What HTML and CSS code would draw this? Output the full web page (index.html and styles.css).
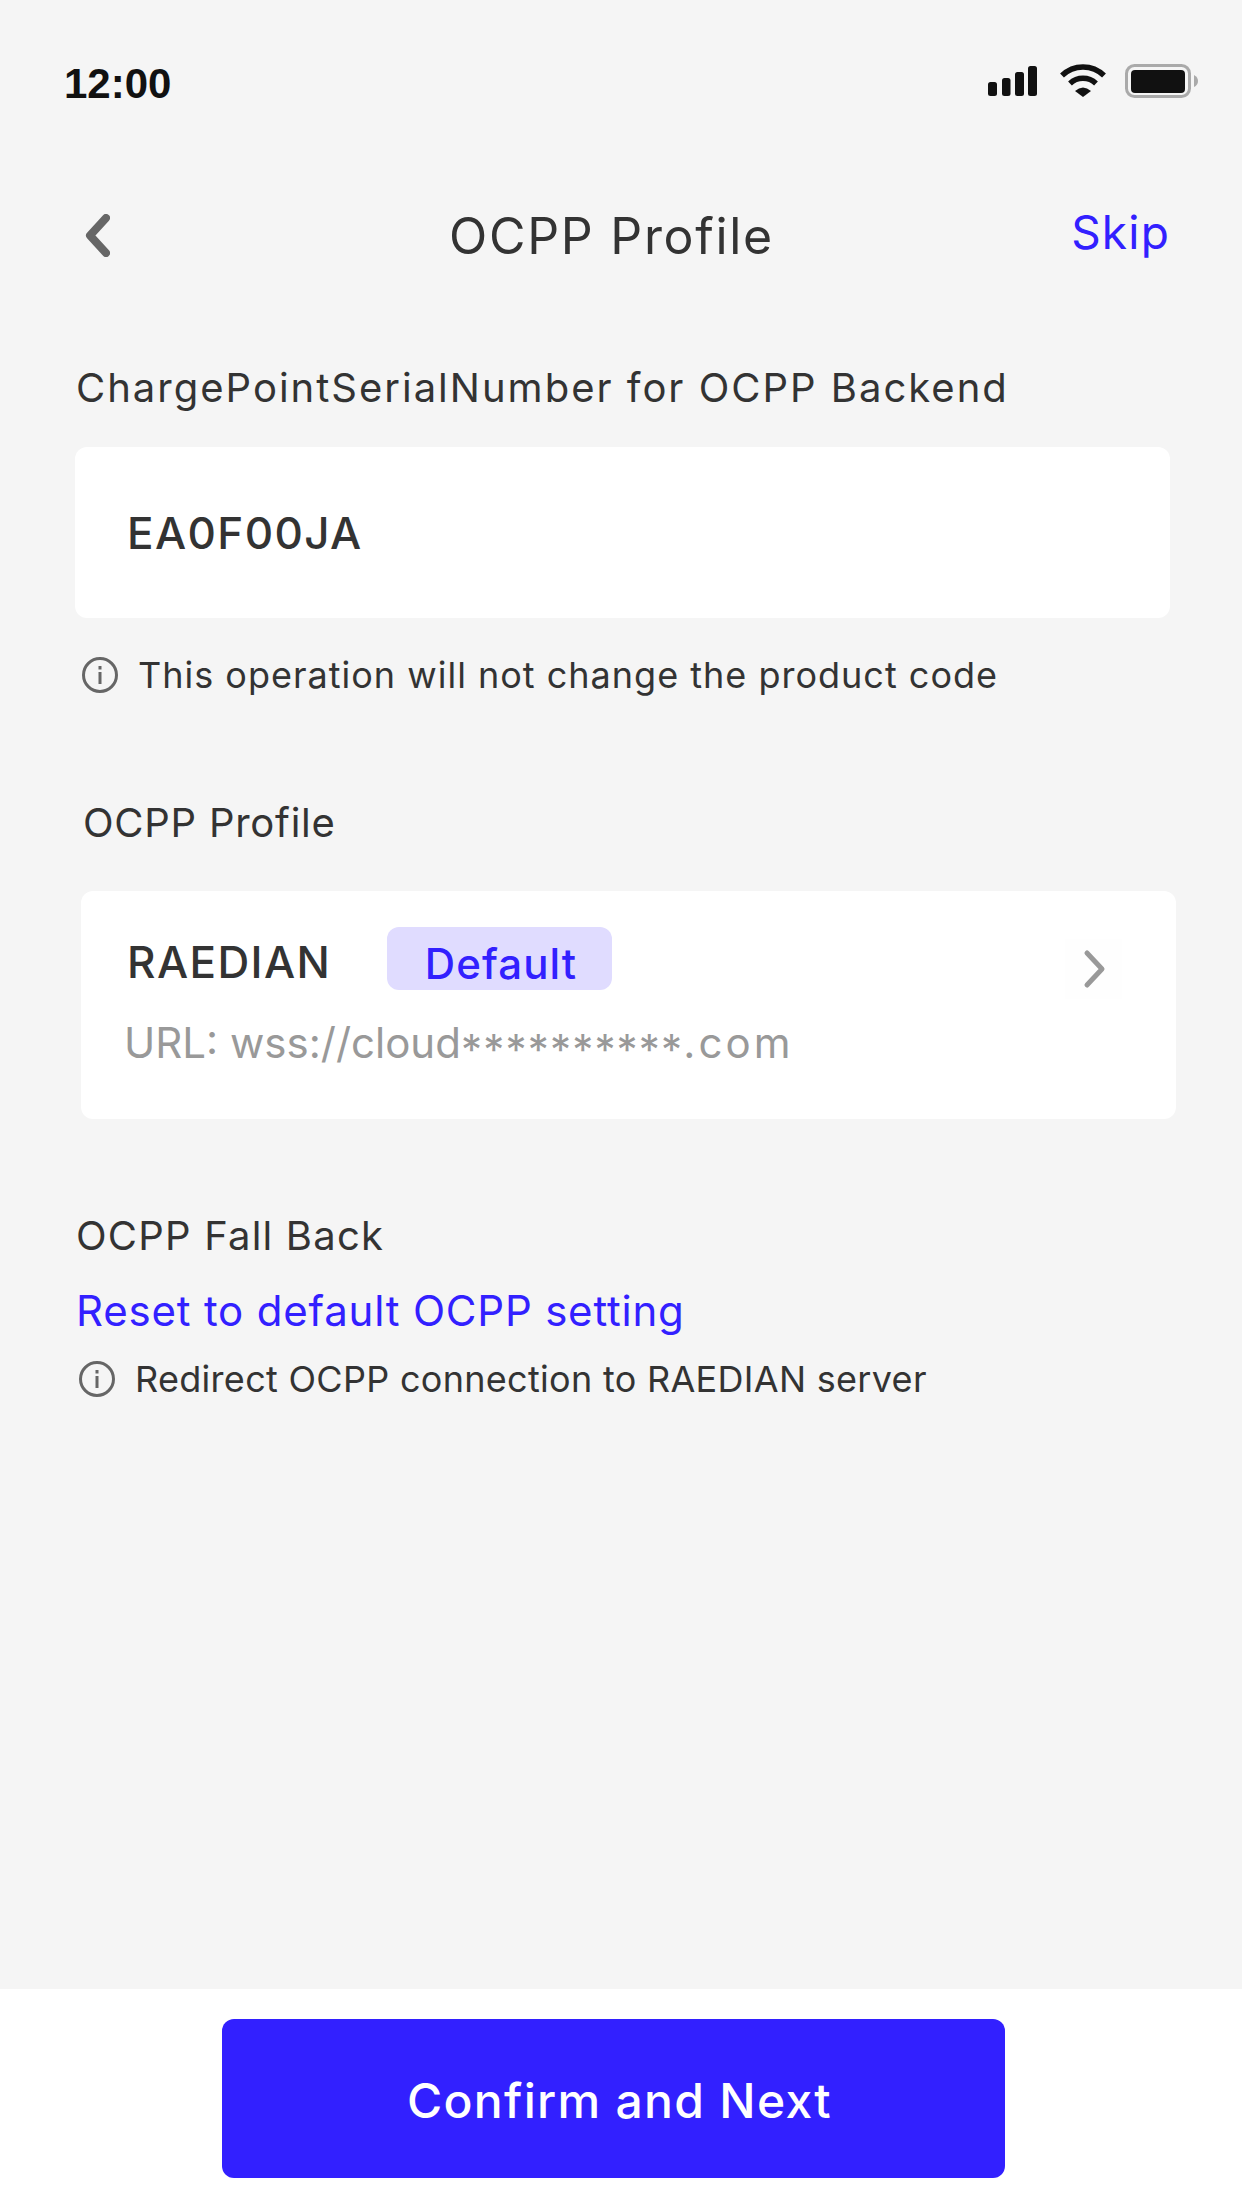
FILE: index.html
```html
<!DOCTYPE html>
<html lang="en">
<head>
    <meta charset="UTF-8">
    <title>OCPP Profile</title>
    <link rel="stylesheet" href="styles.css">
</head>
<body>
    <div class="status-bar">
        <span class="time">12:00</span>
        <svg class="status-icons" viewBox="0 0 210 34" width="210" height="34">
            <rect x="0" y="18" width="9" height="14" rx="2.5" fill="#111"/>
            <rect x="14" y="14" width="8.5" height="18" rx="2.5" fill="#111"/>
            <rect x="27" y="8" width="9" height="24" rx="2.5" fill="#111"/>
            <rect x="40" y="2" width="9" height="30" rx="2.5" fill="#111"/>
            <path d="M74 11.5A30 30 0 0 1 116 11.5" fill="none" stroke="#111" stroke-width="5.5"/>
            <path d="M82 19.5A19 19 0 0 1 108 19.5" fill="none" stroke="#111" stroke-width="5.5"/>
            <path d="M87 27Q95 20 103 27L95 33Z" fill="#111"/>
            <rect x="138.5" y="1.5" width="63" height="31" rx="8" fill="none" stroke="#aaa" stroke-width="3"/>
            <rect x="143" y="6" width="54" height="23" rx="4" fill="#111"/>
            <path d="M206 11Q210 13 210 17Q210 21 206 23Z" fill="#aaa"/>
        </svg>
    </div>

    <div class="nav">
        <span class="back">
            <svg viewBox="0 0 25 43" width="25" height="43"><path d="M21 4L5 21.5L21 39" fill="none" stroke="#666" stroke-width="8" stroke-linecap="round" stroke-linejoin="round"/></svg>
        </span>
        <span class="nav-title">OCPP Profile</span>
        <span class="skip">Skip</span>
    </div>

    <div class="main">
        <div class="label serial-label">ChargePointSerialNumber for OCPP Backend</div>
        <div class="card serial-card">EA0F00JA</div>
        <div class="hint hint-first">
            <svg viewBox="0 0 36 36" width="36" height="36"><circle cx="18" cy="18" r="16.5" fill="none" stroke="#666" stroke-width="3"/><rect x="16.5" y="15" width="3" height="12" fill="#666"/><rect x="16.5" y="9" width="3" height="3.5" fill="#666"/></svg>
            <span>This operation will not change the product code</span>
        </div>

        <div class="label profile-label">OCPP Profile</div>
        <div class="card profile-card">
            <div class="profile-row">
                <span class="profile-name">RAEDIAN</span>
                <span class="badge">Default</span>
                <svg class="chevron" viewBox="0 0 57 60" width="57" height="60"><path d="M22 14L37 30L22 46" fill="none" stroke="#999" stroke-width="5" stroke-linecap="round" stroke-linejoin="round"/></svg>
            </div>
            <div class="profile-url">URL: wss://cloud<span class="mask">**********</span><span class="url-end">.com</span></div>
        </div>

        <div class="label fallback-label">OCPP Fall Back</div>
        <div class="reset-link">Reset to default OCPP setting</div>
        <div class="hint hint-second">
            <svg viewBox="0 0 36 36" width="36" height="36"><circle cx="18" cy="18" r="16.5" fill="none" stroke="#666" stroke-width="3"/><rect x="16.5" y="15" width="3" height="12" fill="#666"/><rect x="16.5" y="9" width="3" height="3.5" fill="#666"/></svg>
            <span>Redirect OCPP connection to RAEDIAN server</span>
        </div>
    </div>

    <div class="footer">
        <button class="next-btn">Confirm and Next</button>
    </div>
</body>
</html>
```

FILE: styles.css
```css
* {
    margin: 0;
    padding: 0;
    box-sizing: border-box;
}

body {
    font-family: Inter, 'Noto Sans', sans-serif;
    background: #f5f5f5;
    color: #333;
    width: 1242px;
    height: 2208px;
    display: flex;
    flex-direction: column;
    overflow: hidden;
}

.status-bar {
    display: flex;
    justify-content: space-between;
    align-items: center;
    height: 66px;
    margin-top: 48px;
    padding: 0 44px 0 64px;
}

.time {
    font-family: 'Liberation Sans', Arial, sans-serif;
    font-size: 42px;
    font-weight: bold;
    color: #111;
    padding-top: 6px;
}

.nav {
    display: flex;
    justify-content: space-between;
    align-items: center;
    height: 80px;
    margin-top: 82px;
    padding: 0 72px 0 85px;
}

.back {
    width: 64px;
    height: 43px;
    margin-top: -2px;
}

.nav-title {
    font-size: 50px;
    letter-spacing: 1.7px;
    width: 322px;
    white-space: nowrap;
}

.skip {
    font-size: 46px;
    letter-spacing: 1.2px;
    color: #3220ff;
    margin-top: -8px;
}

.main {
    flex: 1;
}

.label {
    font-size: 40px;
    line-height: 56px;
    margin-left: 76px;
    white-space: nowrap;
}

.serial-label {
    margin-top: 84px;
    letter-spacing: 2px;
}

.card {
    background: #fff;
    border-radius: 12px;
}

.serial-card {
    display: flex;
    align-items: center;
    width: 1095px;
    height: 171px;
    margin: 31px 0 0 75px;
    padding-left: 52px;
    font-size: 44px;
    font-weight: 500;
    letter-spacing: 1.4px;
}

.hint {
    display: flex;
    align-items: center;
    gap: 20px;
    height: 50px;
    font-size: 36px;
    white-space: nowrap;
}

.hint-first {
    margin: 32px 0 0 82px;
    letter-spacing: 1px;
}

.profile-label {
    margin: 95px 0 0 83px;
    letter-spacing: 0.75px;
}

.profile-card {
    width: 1095px;
    height: 228px;
    margin: 40px 0 0 81px;
    padding-top: 36px;
}

.profile-row {
    display: flex;
    align-items: center;
    height: 63px;
    padding-left: 46px;
}

.profile-name {
    font-size: 44px;
    font-weight: 500;
    letter-spacing: 1.4px;
    width: 260px;
    padding-top: 6px;
}

.badge {
    display: flex;
    align-items: center;
    justify-content: center;
    width: 225px;
    height: 63px;
    padding: 9px 0 0 3px;
    background: #e0dcff;
    border-radius: 12px;
    color: #3220ff;
    font-size: 42px;
    font-weight: 500;
    letter-spacing: 1.1px;
}

.chevron {
    margin: 20px 54px 0 auto;
    background: #fefefe;
}

.profile-url {
    margin: 28px 0 0 43px;
    line-height: 50px;
    font-size: 42px;
    color: #999;
    white-space: nowrap;
}

.mask {
    position: relative;
    top: 7px;
    letter-spacing: 1.2px;
}

.url-end {
    letter-spacing: 3px;
}

.fallback-label {
    margin: 89px 0 0 76px;
    letter-spacing: 1.2px;
}

.reset-link {
    margin: 19px 0 0 76px;
    line-height: 56px;
    font-size: 42px;
    letter-spacing: 0.8px;
    color: #3220ff;
    white-space: nowrap;
}

.hint-second {
    margin: 15px 0 0 79px;
    letter-spacing: 0.3px;
}

.footer {
    height: 219px;
    background: #fff;
    padding: 30px 0 0 222px;
}

.next-btn {
    display: block;
    width: 783px;
    height: 159px;
    padding: 4px 0 0 12px;
    border: none;
    border-radius: 12px;
    background: #3220ff;
    color: #fff;
    font-family: inherit;
    font-size: 48px;
    font-weight: 500;
    letter-spacing: 1.3px;
}
```
